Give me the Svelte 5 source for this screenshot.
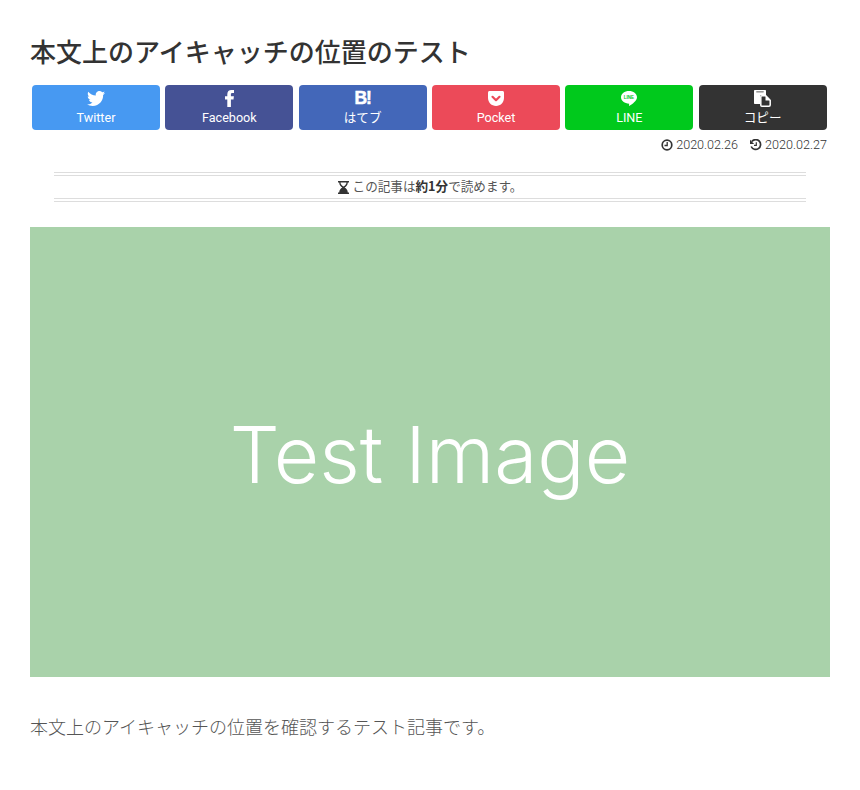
<script>
  const buttons = [
    { name: 'Twitter', cls: 'tw', icon: 'tw' },
    { name: 'Facebook', cls: 'fb', icon: 'fb' },
    { name: 'はてブ', cls: 'hb', icon: 'hb' },
    { name: 'Pocket', cls: 'pk', icon: 'pk' },
    { name: 'LINE', cls: 'ln', icon: 'ln' },
    { name: 'コピー', cls: 'cp', icon: 'cp' }
  ];
</script>

<main class="page">
  <h1>本文上のアイキャッチの位置のテスト</h1>

  <div class="share">
    {#each buttons as b}
      <a class="btn {b.cls}" href="#top">
        <span class="icon">
          {#if b.icon === 'tw'}
            <svg width="18" height="15" viewBox="0 0 24 20"><path fill="#fff" d="M24 2.400c-.9.400-1.800.700-2.800.800 1-.6 1.800-1.600 2.200-2.700-1 .6-2 1-3.100 1.200C19.300.6 18 0 16.600 0c-3.200 0-5.500 3-4.800 6C7.700 5.800 4.100 3.900 1.700.9.400 3.100 1 6 3.200 7.500c-.8 0-1.600-.2-2.200-.6-.1 2.300 1.600 4.400 3.900 4.900-.7.200-1.500.2-2.200.1.600 2 2.400 3.400 4.600 3.400C5.200 17.400 2.600 18.100 0 17.800 2.200 19.200 4.800 20 7.500 20c9.100 0 14.300-7.700 14-14.600 1-.7 1.800-1.600 2.500-3z"/></svg>
          {:else if b.icon === 'fb'}
            <svg width="9" height="17" viewBox="0 0 9 17"><path fill="#fff" d="M2.300 17V9.500H0V6.300h2.300V4.200C2.300 1.500 3.900 0 6.400 0c1.200 0 2.300.1 2.600.1v2.900H7.400c-1.200 0-1.500.6-1.500 1.400v1.900h3l-.4 3.200H5.900V17z"/></svg>
          {:else if b.icon === 'hb'}
            <span class="hb-mark">B!</span>
          {:else if b.icon === 'pk'}
            <svg width="16" height="15" viewBox="0 0 16 15"><path fill="#fff" d="M1.500 0h13C15.300 0 16 .7 16 1.500V7c0 4.400-3.600 8-8 8s-8-3.600-8-8V1.500C0 .7.700 0 1.500 0z"/><path fill="none" stroke="#ec4a59" stroke-width="2.200" stroke-linecap="round" stroke-linejoin="round" d="M4.500 5.800 8 9.200l3.500-3.400"/></svg>
          {:else if b.icon === 'ln'}
            <svg width="16" height="15" viewBox="0 0 16 15"><path fill="#fff" d="M8 0c4.400 0 8 2.700 8 6.200 0 3.400-4.400 6.700-7.500 8.600-.5.300-.6-.2-.5-.6l.2-1.500C3.600 12.400 0 9.700 0 6.200 0 2.700 3.600 0 8 0z"/><text x="8" y="8" class="line-word">LINE</text></svg>
          {:else}
            <svg width="17" height="17" viewBox="0 0 17 17"><path fill="#fff" d="M1 0h10c.6 0 1 .4 1 1v4H7.500C6.700 5 6 5.700 6 6.500V14H1c-.6 0-1-.4-1-1V1c0-.6.400-1 1-1z"/><path fill="#333" d="M2.300 1.500h7.400v.8H2.300z"/><path fill="#333" stroke="#fff" stroke-width="1.500" d="M7.800 5.800h4l4.400 4.400V15c0 .7-.4 1.200-1.200 1.200H7.800c-.6 0-1-.4-1-1V6.800c0-.6.400-1 1-1z"/><path fill="#fff" d="M11.500 5.500l5 5h-5z"/></svg>
          {/if}
        </span>
        <span class="label">{b.name}</span>
      </a>
    {/each}
  </div>

  <div class="dates">
    <span class="date">
      <svg width="12" height="12" viewBox="0 0 12 12"><circle cx="6" cy="6" r="4.800" fill="none" stroke="#333" stroke-width="1.700"/><path fill="none" stroke="#333" stroke-width="1.300" d="M6.200 3v3.500H3.500"/></svg>
      2020.02.26
    </span>
    <span class="date">
      <svg width="12" height="12" viewBox="0 0 12 12"><path fill="none" stroke="#333" stroke-width="1.700" d="M1.800 2.500A4.900 4.900 0 1 1 1.200 7.500"/><path fill="#333" d="M0 .8l4.200 4.100H0z"/><path fill="none" stroke="#333" stroke-width="1.200" d="M6.300 3.300v3H4"/></svg>
      2020.02.27
    </span>
  </div>

  <div class="read">
    <svg width="11" height="13" viewBox="0 0 11 13"><path fill="#333" d="M0 0h11v1.500H9.800C9.800 4 8.300 5.600 6.600 6.500c1.700.9 3.200 2.500 3.200 5H11V13H0v-1.500h1.200c0-2.500 1.500-4.100 3.200-5C2.700 5.600 1.200 4 1.200 1.500H0z"/><path fill="#fff" d="M2.500 1.500h6c-.1 1.800-1.300 3.200-3 4-1.700-.8-2.900-2.200-3-4z"/></svg>
    <span>この記事は<b>約1分</b>で読めます。</span>
  </div>

  <div class="eyecatch"><span>Test Image</span></div>

  <p class="body">本文上のアイキャッチの位置を確認するテスト記事です。</p>
</main>

<style>
  :global(body) {
    margin: 0;
    background: #fff;
  }
  .page {
    box-sizing: border-box;
    width: 860px;
    height: 790px;
    padding: 0 30px;
    font-family: "Noto Sans CJK JP", "Liberation Sans", sans-serif;
    color: #333;
    overflow: hidden;
  }
  h1 {
    margin: 0;
    padding-top: 32px;
    font-size: 26px;
    line-height: 37px;
    font-weight: 500;
    color: #333;
  }
  .share {
    display: grid;
    grid-template-columns: repeat(6, 128px);
    column-gap: 5.333px;
    justify-content: start;
    margin: 16px 0 0 2px;
  }
  .btn {
    height: 45px;
    border-radius: 4px;
    display: flex;
    flex-direction: column;
    align-items: center;
    color: #fff;
    text-decoration: none;
    font-family: Roboto, "Noto Sans CJK JP", sans-serif;
  }
  .icon {
    height: 26px;
    display: flex;
    align-items: center;
    justify-content: center;
  }
  .label {
    font-size: 12.6px;
    line-height: 13px;
  }
  .hb-mark {
    font-family: "Liberation Sans", sans-serif;
    font-weight: 700;
    font-size: 17.5px;
    line-height: 17px;
    letter-spacing: -1px;
    -webkit-text-stroke: 0.5px #fff;
  }
  .line-word {
    font-family: "Liberation Sans", sans-serif;
    font-size: 4.5px;
    font-weight: 700;
    fill: #00c91c;
    text-anchor: middle;
  }
  .tw { background: #4799f2; }
  .fb { background: #455295; }
  .hb { background: #4367b9; }
  .pk { background: #ec4a59; }
  .ln { background: #00c91c; }
  .cp { background: #333; }
  .dates {
    display: flex;
    justify-content: flex-end;
    gap: 12px;
    margin: 7px 3px 0 0;
    font-family: Roboto, sans-serif;
    font-size: 12.6px;
    font-weight: 300;
    line-height: 16px;
    color: #333;
  }
  .date {
    display: inline-flex;
    align-items: center;
    gap: 3px;
  }
  .read {
    margin: 19px 24px 0;
    height: 22px;
    border-top: 4px double #ddd;
    border-bottom: 4px double #ddd;
    display: flex;
    align-items: center;
    justify-content: center;
    gap: 4px;
    font-size: 12.6px;
    color: #555;
  }
  .read span {
    margin-top: -4px;
  }
  .read b {
    font-weight: 700;
    color: #333;
  }
  .eyecatch {
    box-sizing: border-box;
    margin-top: 25px;
    width: 800px;
    height: 450px;
    padding-top: 4px;
    background: #a9d2aa;
    display: flex;
    align-items: center;
    justify-content: center;
    color: #fff;
    font-family: Inter, sans-serif;
    font-weight: 350;
    font-size: 78.5px;
  }
  .body {
    margin: 36px 0 0;
    font-size: 18px;
    line-height: 26px;
    color: #555;
    font-weight: 300;
  }
</style>
